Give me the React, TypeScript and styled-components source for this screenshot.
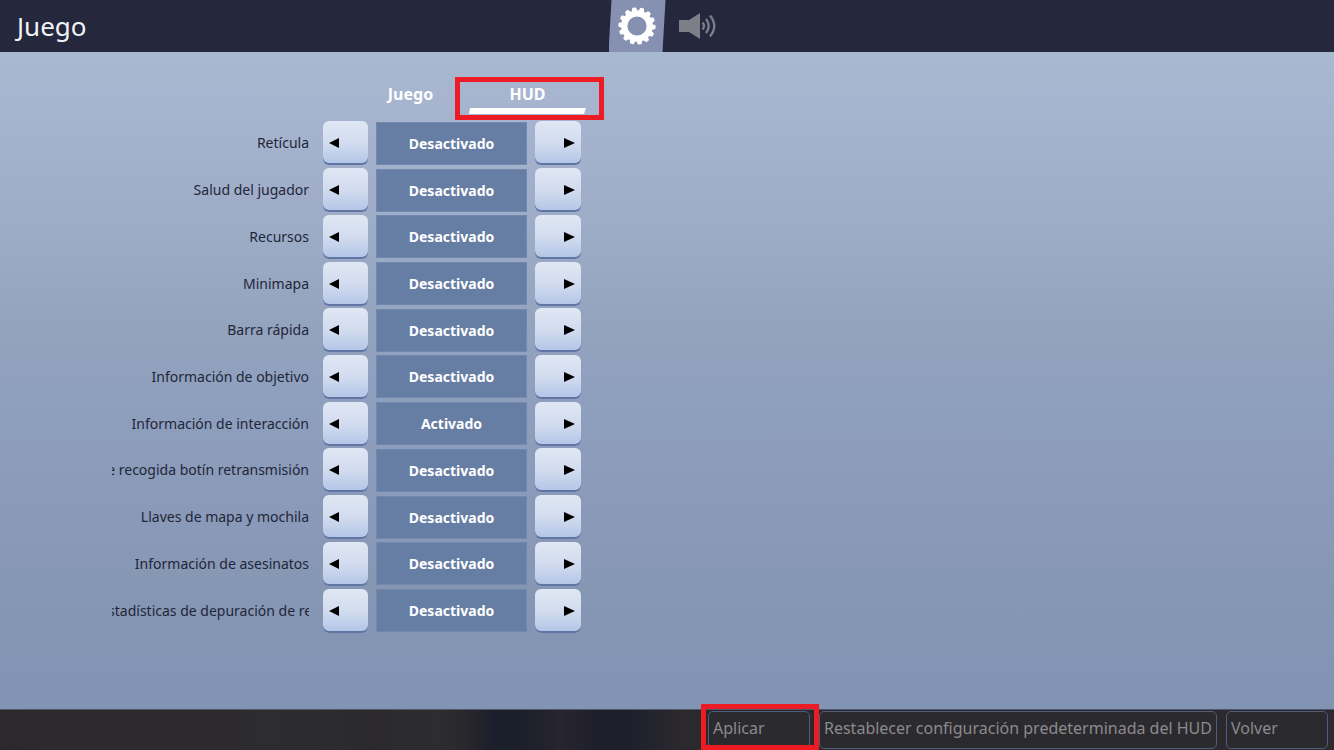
import React, { useState } from "react";
import styled, { createGlobalStyle } from "styled-components";

const GlobalStyle = createGlobalStyle`
  *, *::before, *::after { box-sizing: border-box; }
  body { margin: 0; font-family: "Noto Sans", "Open Sans", sans-serif; }
  button { font-family: inherit; cursor: pointer; }
`;

const Screen = styled.div`
  display: flex;
  flex-direction: column;
  min-height: 100vh;
  overflow: hidden;
  background: linear-gradient(
    180deg,
    #a9b8d1 52px,
    #a4b1cd 20%,
    #9fadc9 27%,
    #9aaac4 34%,
    #93a2bd 44%,
    #8f9fbe 52%,
    #8b9ab9 66%,
    #8697b4 78%,
    #8294b4 92%
  );
`;

const Header = styled.header`
  display: grid;
  grid-template-columns: 1fr auto 1fr;
  align-items: center;
  height: 52px;
  background: #25273c;
`;

const Title = styled.h1`
  margin: 0;
  padding-left: 17px;
  font-size: 26px;
  line-height: 32px;
  font-weight: 400;
  color: #f1f3f6;
`;

const SectionNav = styled.nav`
  display: flex;
  height: 52px;
`;

const SectionButton = styled.button<{ $active?: boolean }>`
  display: flex;
  align-items: center;
  justify-content: center;
  width: ${(p) => (p.$active ? 57 : 60)}px;
  height: 52px;
  padding: ${(p) => (p.$active ? "0" : "0 0 0 4px")};
  border: 0;
  background: ${(p) => (p.$active ? "#8690b0" : "transparent")};
  clip-path: ${(p) => (p.$active ? "polygon(3px 0, 100% 0, 54px 100%, 0 100%)" : "none")};
`;

const Content = styled.main`
  flex: 1;
  padding: 26px 16px 24px 112px;
`;

const Tabs = styled.div`
  display: flex;
  margin-left: 240px;
  height: 42px;
`;

const TabSlot = styled.div`
  position: relative;
`;

const Tab = styled.button<{ $active?: boolean }>`
  position: relative;
  display: block;
  width: 117px;
  height: 36px;
  padding: 0 0 4px;
  border: 0;
  background: transparent;
  color: #fff;
  font-size: 16px;
  line-height: 32px;
  font-weight: 700;

  &::after {
    content: "";
    display: ${(p) => (p.$active ? "block" : "none")};
    position: absolute;
    left: 0;
    right: 0;
    bottom: 0;
    height: 6px;
    background: #fff;
    clip-path: polygon(1px 0, 100% 0, calc(100% - 2px) 100%, 0 100%);
  }
`;

const Highlight = styled.span<{ $inset: string }>`
  position: absolute;
  inset: ${(p) => p.$inset};
  border: 5px solid #ed1c24;
  pointer-events: none;
`;

const Options = styled.div`
  display: grid;
  grid-auto-rows: 1fr;
  min-height: 514px;
`;

const OptionRow = styled.div`
  display: flex;
  align-items: center;
`;

const OptionLabel = styled.span<{ $centered?: boolean }>`
  display: flex;
  justify-content: ${(p) => (p.$centered ? "center" : "flex-end")};
  width: 197px;
  margin-right: 14px;
  overflow: hidden;
  white-space: nowrap;
  font-size: 14px;
  line-height: 20px;
  color: #1f2638;
`;

const Stepper = styled.div`
  display: flex;
  align-items: center;
  gap: 8px;
`;

const StepButton = styled.button<{ $side: "left" | "right" }>`
  display: flex;
  align-items: center;
  justify-content: ${(p) => (p.$side === "left" ? "flex-start" : "flex-end")};
  width: ${(p) => (p.$side === "left" ? 45 : 46)}px;
  height: 44px;
  padding: 0 6px;
  border: 0;
  border-radius: 6px;
  background: linear-gradient(180deg, #e0e7f4, #d2dcef 50%, #b1c4e6);
  box-shadow: inset 0 -2px 0 #6075a3;
`;

const Value = styled.output`
  width: 151px;
  height: 43px;
  border: 1px solid #7288ae;
  background: #667da4;
  color: #fff;
  font-size: 14px;
  line-height: 42px;
  font-weight: 700;
  text-align: center;
`;

const Footer = styled.footer`
  display: flex;
  justify-content: flex-end;
  gap: 9px;
  height: 41px;
  padding: 1px 6px 2px 0;
  border-top: 1px solid #50566a;
  background: linear-gradient(
    90deg,
    #2b282e 0,
    #2c2a2d 3%,
    #2c2a2e 18%,
    #2d2d31 20%,
    #2b292d 28%,
    #2d2d30 33%,
    #29272c 35%,
    #1b1e2b 37%,
    #1b1e2b 39%,
    #27252d 42%,
    #1e1f2c 45%,
    #1e1f2c 47%,
    #2b292d 51%,
    #2c2a2e 100%
  );
`;

const ActionSlot = styled.div`
  position: relative;
`;

const ActionButton = styled.button`
  display: block;
  min-width: 102px;
  height: 38px;
  padding: 0 4px 4px;
  border: 1px solid #505c7a;
  border-radius: 5px;
  background: #2b2a2e;
  color: #8b8a8d;
  font-size: 16px;
  line-height: 24px;
  text-align: left;
  white-space: nowrap;
`;

const TOOTH_COUNT = 14;
const teeth = Array.from({ length: TOOTH_COUNT }, (_, i) => (i * 360) / TOOTH_COUNT);

function GearIcon() {
  return (
    <svg width="38" height="38" viewBox="-19 -19 38 38" aria-hidden="true">
      <circle r="12.7" fill="none" stroke="#fff" strokeWidth="6.2" />
      {teeth.map((angle) => (
        <path
          key={angle}
          d="M-2.8-15 L-2.1-17.8 Q-1.9-18.6-1.2-18.6 H1.2 Q1.9-18.6 2.1-17.8 L2.8-15Z"
          fill="#fff"
          transform={`rotate(${angle - 9})`}
        />
      ))}
    </svg>
  );
}

function SpeakerIcon() {
  return (
    <svg width="38" height="28" viewBox="0 0 38 28" aria-hidden="true">
      <path d="M0 8H10L21 1V27L10 20H0Z" fill="#7c7e88" />
      <g fill="none" stroke="#7c7e88" strokeWidth="2.3">
        <path d="M23.5 10.5Q26.5 14 23.5 17.5" />
        <path d="M27 7Q32.5 14 27 21" />
        <path d="M31 3.5Q39.5 14 31 24.5" />
      </g>
    </svg>
  );
}

function Arrow({ side }: { side: "left" | "right" }) {
  return (
    <svg width="11" height="10" viewBox="0 0 11 10" aria-hidden="true">
      <path d={side === "left" ? "M0 5L10 0V10Z" : "M11 5L0 0V10Z"} fill="#000" />
    </svg>
  );
}

const options = [
  { label: "Retícula", on: false },
  { label: "Salud del jugador", on: false },
  { label: "Recursos", on: false },
  { label: "Minimapa", on: false },
  { label: "Barra rápida", on: false },
  { label: "Información de objetivo", on: false },
  { label: "Información de interacción", on: true },
  { label: "de recogida botín retransmisión", on: false },
  { label: "Llaves de mapa y mochila", on: false },
  { label: "Información de asesinatos", on: false },
  { label: "Estadísticas de depuración de red", on: false, centered: true },
];

export default function App() {
  const [values, setValues] = useState(options.map((o) => o.on));
  const toggle = (index: number) =>
    setValues((prev) => prev.map((v, i) => (i === index ? !v : v)));

  return (
    <Screen>
      <GlobalStyle />
      <Header>
        <Title>Juego</Title>
        <SectionNav>
          <SectionButton $active aria-label="Juego">
            <GearIcon />
          </SectionButton>
          <SectionButton aria-label="Sonido">
            <SpeakerIcon />
          </SectionButton>
        </SectionNav>
      </Header>

      <Content>
        <Tabs role="tablist">
          <Tab role="tab" aria-selected={false}>
            Juego
          </Tab>
          <TabSlot>
            <Tab role="tab" aria-selected $active>
              HUD
            </Tab>
            <Highlight $inset="-1px -18px 0 -14px" />
          </TabSlot>
        </Tabs>

        <Options>
          {options.map((option, i) => (
            <OptionRow key={option.label}>
              <OptionLabel id={`option-${i}`} $centered={option.centered}>
                {option.label}
              </OptionLabel>
              <Stepper role="group" aria-labelledby={`option-${i}`}>
                <StepButton $side="left" aria-label="Anterior" onClick={() => toggle(i)}>
                  <Arrow side="left" />
                </StepButton>
                <Value>{values[i] ? "Activado" : "Desactivado"}</Value>
                <StepButton $side="right" aria-label="Siguiente" onClick={() => toggle(i)}>
                  <Arrow side="right" />
                </StepButton>
              </Stepper>
            </OptionRow>
          ))}
        </Options>
      </Content>

      <Footer>
        <ActionSlot>
          <ActionButton>Aplicar</ActionButton>
          <Highlight $inset="-7px -9px -2px -7px" />
        </ActionSlot>
        <ActionButton>Restablecer configuración predeterminada del HUD</ActionButton>
        <ActionButton>Volver</ActionButton>
      </Footer>
    </Screen>
  );
}
